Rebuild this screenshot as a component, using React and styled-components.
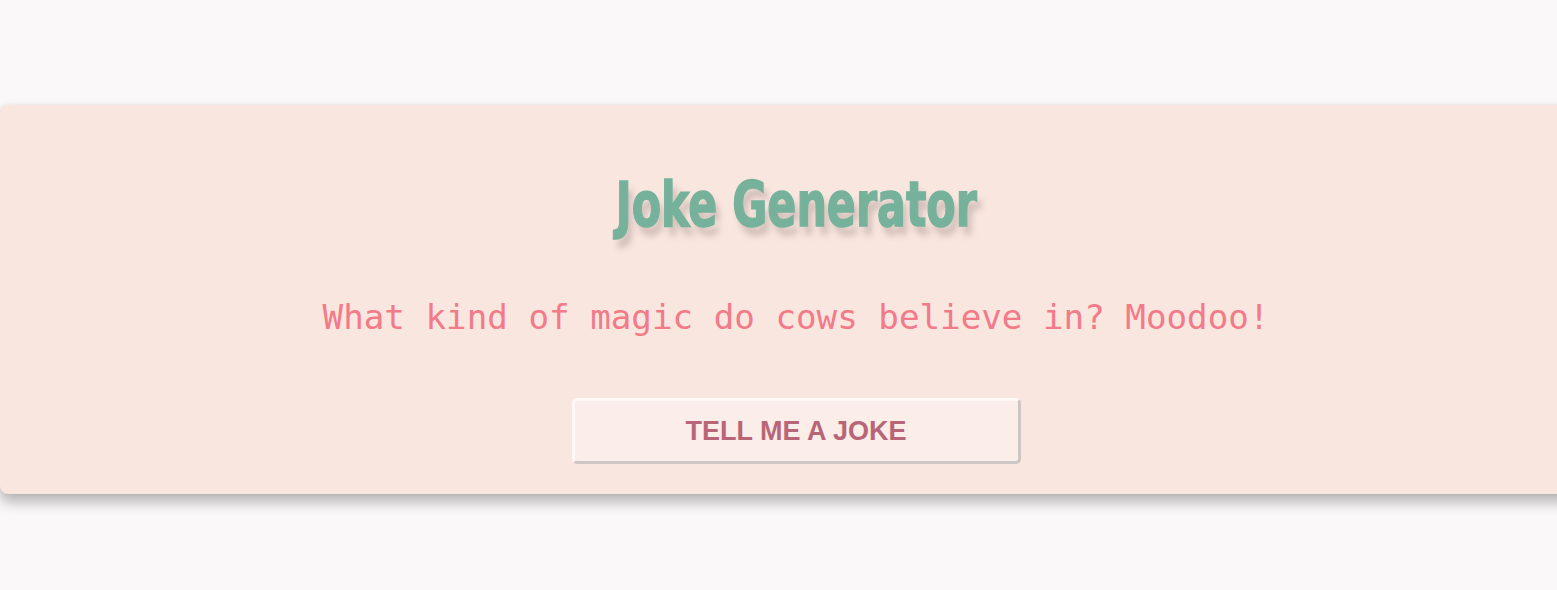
import React, { useState } from "react";
import styled, { createGlobalStyle } from "styled-components";

const GlobalStyle = createGlobalStyle`
  html, body {
    margin: 0;
    padding: 0;
    background: #faf8f9;
    overflow: hidden;
  }
`;

const Page = styled.div`
  width: 100vw;
  height: 590px;
  padding-top: 105px;
  box-sizing: border-box;
  overflow: hidden;
`;

const Card = styled.div`
  width: 1592px;
  height: 389px;
  box-sizing: border-box;
  background: #f9e6df;
  border-radius: 8px;
  box-shadow: 0 8px 14px rgba(0, 0, 0, 0.28), 0 0 4px rgba(0, 0, 0, 0.06);
  display: flex;
  flex-direction: column;
  align-items: center;
  padding-top: 62px;
`;

const Title = styled.h1`
  margin: 0;
  font-family: "DejaVu Sans Condensed", "Liberation Sans Narrow", sans-serif;
  font-weight: 700;
  font-size: 52px;
  line-height: 76px;
  transform: translateY(-1px) scale(0.915, 1.2);
  color: #76b29b;
  -webkit-text-stroke: 1.2px #76b29b;
  text-shadow: 5px 8px 6px rgba(110, 90, 85, 0.28);
`;

const Joke = styled.p`
  margin: 54px 0 0;
  font-family: "DejaVu Sans Mono", "Liberation Mono", monospace;
  font-size: 34.2px;
  line-height: 40px;
  color: #f27a89;
`;

const Button = styled.button`
  margin-top: 61px;
  width: 449px;
  height: 66px;
  box-sizing: border-box;
  background: #fbede8;
  border-style: solid;
  border-width: 3px;
  border-color: #fff8f5 #cdc6c4 #cdc6c4 #fff8f5;
  border-radius: 5px;
  font-family: "Liberation Sans", Arial, sans-serif;
  font-weight: 700;
  font-size: 27px;
  color: #b86677;
  cursor: pointer;
`;

const jokes = [
  "What kind of magic do cows believe in? Moodoo!",
];

export default function App() {
  const [joke, setJoke] = useState(jokes[0]);
  return (
    <Page>
      <GlobalStyle />
      <Card>
        <Title>Joke Generator</Title>
        <Joke>{joke}</Joke>
        <Button onClick={() => setJoke(jokes[0])}>TELL ME A JOKE</Button>
      </Card>
    </Page>
  );
}
